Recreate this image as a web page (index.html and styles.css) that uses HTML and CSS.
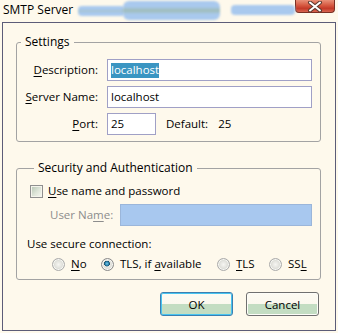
FILE: index.html
```html
<!DOCTYPE html>
<html lang="en">
  <head>
    <meta charset="UTF-8" />
    <meta name="viewport" content="width=device-width, initial-scale=1.0" />
    <title>SMTP Server</title>
    <link rel="stylesheet" href="styles.css">
  </head>
  <body>
    <div class="titlebar">
      <span class="title">SMTP Server</span>
      <span class="glow glow-left"></span>
      <span class="glow glow-mid"></span>
      <span class="glow glow-right"></span>
      <button class="close" aria-label="Close">
        <svg width="16" height="11" viewBox="0 0 16 11">
          <path d="M3 1.5 L13 9.5 M13 1.5 L3 9.5" stroke="#5b3a30" stroke-width="4" stroke-linecap="round" />
          <path d="M3 1.5 L13 9.5 M13 1.5 L3 9.5" stroke="#ffffff" stroke-width="2" stroke-linecap="round" />
        </svg>
      </button>
    </div>

    <div class="window">
      <fieldset class="group settings">
        <legend>Settings</legend>
        <div class="form-grid">
          <label class="field-label"><u>D</u>escription:</label>
          <div class="textbox"><span class="selected">localhost</span></div>

          <label class="field-label"><u>S</u>erver Name:</label>
          <div class="textbox">localhost</div>

          <label class="field-label"><u>P</u>ort:</label>
          <div class="port-row">
            <div class="textbox port">25</div>
            <span class="default-label">Default:</span>
            <span>25</span>
          </div>
        </div>
      </fieldset>

      <fieldset class="group security">
        <legend>Security and Authentication</legend>
        <label class="check-row">
          <input type="checkbox" class="checkbox" />
          <span><u>U</u>se name and password</span>
        </label>
        <div class="user-row">
          <label class="disabled-label">User Na<u>m</u>e:</label>
          <div class="textbox disabled"></div>
        </div>
        <div class="secure-label">Use secure connection:</div>
        <div class="radio-row">
          <label class="option opt-no">
            <input type="radio" name="secure" class="radio" />
            <span><u>N</u>o</span>
          </label>
          <label class="option opt-avail">
            <input type="radio" name="secure" class="radio" checked />
            <span>TLS, if <u>a</u>vailable</span>
          </label>
          <label class="option opt-tls">
            <input type="radio" name="secure" class="radio" />
            <span><u>T</u>LS</span>
          </label>
          <label class="option">
            <input type="radio" name="secure" class="radio" />
            <span>SS<u>L</u></span>
          </label>
        </div>
      </fieldset>

      <div class="buttons">
        <button class="btn btn-default">OK</button>
        <button class="btn">Cancel</button>
      </div>
    </div>
  </body>
</html>
```

FILE: styles.css
```css
body {
  margin: 0;
  background: #fef9ec;
  font-family: "Open Sans", "Noto Sans", sans-serif;
  font-size: 11.5px;
  line-height: 16px;
  color: #000;
}
u {
  text-decoration-thickness: 1px;
  text-underline-offset: 2px;
}
.titlebar {
  display: flex;
  align-items: flex-start;
  height: 22px;
  margin-right: 3px;
}
.title {
  margin: 2px 0 0 3px;
  font-size: 12px;
  white-space: nowrap;
}
.glow {
  background: #a9c9ee;
  filter: blur(0.8px);
}
.glow-left {
  width: 48px;
  height: 10px;
  margin: 6px 0 0 5px;
  border-radius: 4px;
  background: linear-gradient(180deg, #a9c9ee 35%, #a6c2c6 50%, #a9c9ee 65%);
}
.glow-mid {
  width: 100px;
  height: 19px;
  margin: 1px 0 0 -2px;
  border-radius: 6px;
  background: linear-gradient(180deg, #a9c9ee 30%, #9fbcb8 50%, #a9c9ee 70%);
}
.glow-right {
  width: 66px;
  height: 10px;
  margin: 5px 0 0 11px;
  border-radius: 4px;
}
.close {
  margin-left: auto;
  width: 41px;
  height: 13px;
  padding: 0;
  border: 1px solid #7a3024;
  border-top: none;
  border-radius: 0 0 4px 4px;
  background: linear-gradient(180deg, #e89078 0%, #d65840 45%, #c43a28 70%, #d86450 100%);
  display: flex;
  align-items: center;
  justify-content: center;
}
.window {
  box-sizing: border-box;
  height: 309px;
  margin: 0 2px;
  border: 1px solid #5c5c78;
  background: #fef9ec;
}
.group {
  margin: 0 14px 0 13px;
  padding: 0 8px 0 0;
  border: 1px solid #a3a3a3;
  border-radius: 3px;
  min-width: 0;
}
.group legend {
  margin-left: 4px;
  padding: 0 4px;
  font-size: 12px;
}
.settings {
  margin-top: 11px;
  padding-top: 9px;
  padding-bottom: 6px;
}
.form-grid {
  display: grid;
  grid-template-columns: 81px 1fr;
  column-gap: 9px;
  row-gap: 5px;
  align-items: center;
}
.field-label {
  text-align: right;
  white-space: nowrap;
}
.textbox {
  box-sizing: border-box;
  height: 22px;
  padding: 2px 3px;
  border: 1px solid #a0a0c6;
  background: #fff;
  white-space: nowrap;
}
.selected {
  display: inline-block;
  background: #3a95c2;
  color: #fff;
  line-height: 14px;
  padding-bottom: 1px;
}
.port-row {
  display: flex;
  align-items: center;
}
.textbox.port {
  width: 49px;
}
.default-label {
  margin: 0 10px 0 10px;
}
.security {
  margin-top: 18px;
  padding-left: 13px;
  padding-top: 7px;
  padding-bottom: 7px;
}
.check-row {
  display: flex;
  align-items: center;
  gap: 5px;
  height: 16px;
}
.checkbox {
  appearance: none;
  margin: 0;
  width: 13px;
  height: 13px;
  border: 1px solid #8f8f8f;
  background: linear-gradient(135deg, #b4c4b2 0%, #dfe6da 55%, #f7f8f2 100%);
  box-shadow: inset 0 0 0 1px #f4f4ec;
}
.user-row {
  display: flex;
  align-items: center;
  margin: 5px 0 0 20px;
}
.disabled-label {
  width: 70px;
  flex: none;
  color: #8d8d8d;
  white-space: nowrap;
}
.textbox.disabled {
  flex: 1;
  background: #a8c8ef;
  border-color: #9bb6da;
}
.secure-label {
  margin: 10px 0 0 -3px;
}
.radio-row {
  display: flex;
  align-items: center;
  margin: 4px 0 0 22px;
  height: 16px;
}
.option {
  display: flex;
  align-items: center;
  gap: 6px;
  white-space: nowrap;
}
.opt-no {
  width: 49px;
}
.opt-avail {
  width: 116px;
}
.opt-tls {
  width: 52px;
}
.radio {
  appearance: none;
  margin: 0;
  width: 13px;
  height: 13px;
  border-radius: 50%;
  border: 1px solid #ababab;
  background: radial-gradient(circle closest-side, #f6f6f2 0%, #e4e4df 60%, #d0d2cc 100%);
  box-shadow: inset 0 0 0 1px #f8f8f4;
}
.radio:checked {
  background:
    radial-gradient(circle closest-side at 45% 42%, #79c8e6 0%, #2a84b0 40%, #1c4e68 58%, transparent 66%),
    radial-gradient(circle closest-side, #f6f6f2 0%, #e4e4df 60%, #d0d2cc 100%);
  border-color: #8a8a8a;
}
.buttons {
  display: flex;
  justify-content: flex-end;
  gap: 13px;
  margin: 12px 16px 0 0;
}
.btn {
  box-sizing: border-box;
  width: 73px;
  height: 24px;
  padding: 0;
  border: 1px solid #707070;
  border-radius: 3px;
  background: linear-gradient(180deg, #fdfbf3 0%, #fbf8ee 48%, #c3ddc2 50%, #c3ddc2 100%);
  box-shadow: inset 0 0 0 1px #fdfdf8;
  font-family: inherit;
  font-size: 11.5px;
  color: #000;
}
.btn-default {
  border-color: #3c7fb1;
  box-shadow: inset 0 0 0 1px #48c4f0;
}
```
